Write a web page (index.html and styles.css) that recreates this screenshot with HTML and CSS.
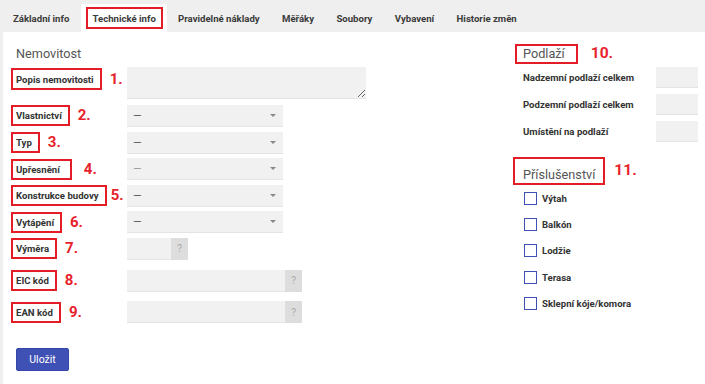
FILE: index.html
```html
<!DOCTYPE html>
<html lang="cs">
<head>
<meta charset="utf-8">
<title>Technické info</title>
<link rel="stylesheet" href="styles.css">
</head>
<body>
<nav class="tabs">
  <div class="tab"><span class="tab-text">Základní info</span></div>
  <div class="tab tab-active"><span class="tab-text tab-marked">Technické info</span></div>
  <div class="tab"><span class="tab-text">Pravidelné náklady</span></div>
  <div class="tab"><span class="tab-text">Měřáky</span></div>
  <div class="tab"><span class="tab-text">Soubory</span></div>
  <div class="tab"><span class="tab-text">Vybavení</span></div>
  <div class="tab"><span class="tab-text">Historie změn</span></div>
</nav>
<div class="panel">
  <section class="main">
    <h2 class="section-title">Nemovitost</h2>
    <div class="form">
      <div class="row row-tall">
        <div class="label label-top"><span class="mark">Popis nemovitosti</span><span class="num">1.</span></div>
        <textarea class="field textarea"></textarea>
      </div>
      <div class="row">
        <div class="label"><span class="mark">Vlastnictví</span><span class="num">2.</span></div>
        <div class="field select"><span class="dash">—</span><span class="caret"></span></div>
      </div>
      <div class="row">
        <div class="label"><span class="mark">Typ</span><span class="num">3.</span></div>
        <div class="field select"><span class="dash">—</span><span class="caret"></span></div>
      </div>
      <div class="row">
        <div class="label"><span class="mark mark-wide">Upřesnění</span><span class="num num-far">4.</span></div>
        <div class="field select"><span class="dash dash-light">—</span><span class="caret"></span></div>
      </div>
      <div class="row">
        <div class="label"><span class="mark">Konstrukce budovy</span><span class="num num-near">5.</span></div>
        <div class="field select"><span class="dash">—</span><span class="caret"></span></div>
      </div>
      <div class="row">
        <div class="label"><span class="mark">Vytápění</span><span class="num">6.</span></div>
        <div class="field select"><span class="dash">—</span><span class="caret"></span></div>
      </div>
      <div class="row">
        <div class="label"><span class="mark">Výměra</span><span class="num">7.</span></div>
        <div class="group group-short"><div class="field input"></div><div class="addon">?</div></div>
      </div>
      <div class="row row-spaced">
        <div class="label"><span class="mark">EIC kód</span><span class="num">8.</span></div>
        <div class="group group-long"><div class="field input"></div><div class="addon">?</div></div>
      </div>
      <div class="row row-spaced">
        <div class="label"><span class="mark">EAN kód</span><span class="num">9.</span></div>
        <div class="group group-long"><div class="field input"></div><div class="addon">?</div></div>
      </div>
    </div>
    <button class="btn" type="button">Uložit</button>
  </section>
  <aside class="side">
    <div class="side-head"><h2 class="side-title mark">Podlaží</h2><span class="num num-big">10.</span></div>
    <div class="floors">
      <div class="floor-row"><span class="side-label">Nadzemní podlaží celkem</span><div class="field mini"></div></div>
      <div class="floor-row"><span class="side-label">Podzemní podlaží celkem</span><div class="field mini"></div></div>
      <div class="floor-row"><span class="side-label">Umístění na podlaží</span><div class="field mini"></div></div>
    </div>
    <div class="side-head side-head-2"><h2 class="side-title mark mark-tall">Příslušenství</h2><span class="num num-big">11.</span></div>
    <ul class="checks">
      <li class="check"><span class="box"></span><span class="side-label">Výtah</span></li>
      <li class="check"><span class="box"></span><span class="side-label">Balkón</span></li>
      <li class="check"><span class="box"></span><span class="side-label">Lodžie</span></li>
      <li class="check"><span class="box"></span><span class="side-label">Terasa</span></li>
      <li class="check"><span class="box"></span><span class="side-label">Sklepní kóje/komora</span></li>
    </ul>
  </aside>
</div>
</body>
</html>
```
FILE: styles.css
```css
* { box-sizing: border-box; }
html, body { margin: 0; padding: 0; }
body {
  width: 705px;
  height: 384px;
  overflow: hidden;
  background: #efefef;
  font-family: Roboto, "Liberation Sans", sans-serif;
  color: #333;
}
.tabs {
  display: flex;
  height: 32px;
  padding: 4px 0 0 1px;
  background: #efefef;
}
.tab {
  display: flex;
  align-items: center;
  padding: 0 5.2px;
  font-size: 9.6px;
  font-weight: 700;
  color: #3a3a3a;
}
.tab:first-child { padding-left: 6px; }
.tab-text {
  display: flex;
  align-items: center;
  height: 22px;
  padding: 0 4px;
  border: 2px solid transparent;
}
.tab-active { background: #fff; padding: 0 4px 0 5px; }
.tab-marked { border-color: #e21d25; padding: 0 5px 0 5px; }

.panel {
  display: flex;
  height: 352px;
  margin-left: 3px;
  background: #fff;
}
.main {
  flex: 1;
  padding-left: 13px;
}
.section-title {
  margin: 14px 0 0;
  font-size: 12.7px;
  line-height: 16px;
  font-weight: 400;
  color: #555;
}
.form {
  display: flex;
  flex-direction: column;
  gap: 4.6px;
  margin-top: 5px;
}
.row {
  display: flex;
  align-items: center;
  height: 22px;
}
.row-tall { height: 32px; align-items: flex-start; margin-bottom: 1.4px; }
.row-spaced { margin-top: 5px; }
.label {
  display: flex;
  align-items: center;
  width: 111px;
  font-size: 9.6px;
  font-weight: 700;
  color: #333;
}
.label-top { padding-top: 1px; }
.mark {
  display: inline-flex;
  align-items: center;
  margin-left: -5px;
  padding: 3px 6px 3px 3px;
  border: 2px solid #e21d25;
  white-space: nowrap;
}
.label .mark { height: 21px; }
.row-tall .label .mark { height: 22px; }
.mark-wide { padding-right: 10px; }
.num {
  margin-left: 8px;
  color: #e8222b;
  font-size: 15px;
  font-weight: 700;
  line-height: 1;
}
.num-far { margin-left: 12px; }
.num-near { margin-left: 4px; }
.field {
  background: #f1f1f1;
  border: 0;
  border-bottom: 1px solid #e4e4e4;
}
.textarea {
  display: block;
  width: 239px;
  height: 32px;
  margin: 0;
  padding: 0;
  font: inherit;
  resize: both;
}
.select {
  display: flex;
  align-items: center;
  justify-content: space-between;
  width: 156px;
  height: 22px;
  padding: 0 7px 0 6px;
}
.dash { font-size: 11px; color: #555; }
.dash-light { color: #999; }
.caret {
  width: 0;
  height: 0;
  border-left: 3px solid transparent;
  border-right: 3px solid transparent;
  border-top: 3px solid #888;
}
.group {
  display: flex;
  height: 22px;
}
.group-short { width: 61px; }
.group-long { width: 175px; }
.input { flex: 1; height: 22px; }
.addon {
  display: flex;
  align-items: center;
  justify-content: center;
  width: 17px;
  height: 22px;
  background: #dddddd;
  color: #aaa;
  font-size: 10px;
}
.btn {
  display: block;
  width: 53px;
  height: 23px;
  margin-top: 25px;
  padding: 0;
  background: #3f51b5;
  color: #fff;
  border: 1px solid #3447a8;
  border-radius: 2px;
  font-family: inherit;
  font-size: 10.5px;
}

.side {
  width: 187px;
  padding: 12px 7px 0 5px;
}
.side-head {
  display: flex;
  align-items: center;
  height: 20px;
}
.side-title {
  margin: 0 0 0 -8px;
  height: 20px;
  padding: 0 11px 0 6px;
  font-size: 12.7px;
  font-weight: 400;
  color: #555;
  line-height: 1;
}
.num-big { margin-left: 13px; font-size: 15.5px; }
.floors {
  display: flex;
  flex-direction: column;
  gap: 6px;
  margin-top: 3px;
}
.floor-row {
  display: flex;
  align-items: center;
  justify-content: space-between;
  height: 21px;
}
.side-label {
  font-size: 9.6px;
  font-weight: 700;
  color: #333;
}
.mini { width: 42px; height: 21px; }
.side-head-2 { height: 28px; margin-top: 15px; align-items: flex-start; }
.mark-tall {
  height: 28px;
  margin-left: -10px;
  padding: 10px 8px 0 8px;
  align-items: flex-start;
}
.side-head-2 .num-big { margin-top: 6px; margin-left: 9px; }
.checks {
  list-style: none;
  margin: 0;
  padding: 0;
}
.check {
  display: flex;
  align-items: center;
  height: 26.3px;
  padding-left: 1px;
}
.box {
  width: 13px;
  height: 13px;
  margin-right: 5px;
  border: 1.7px solid #3f51b5;
  background: #fff;
}
```
